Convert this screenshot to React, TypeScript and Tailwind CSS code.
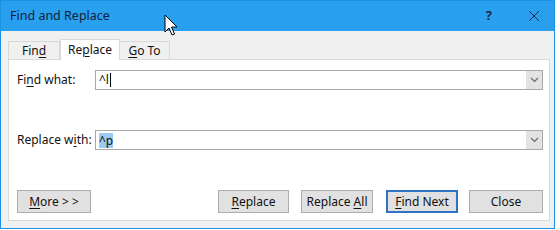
import React from "react";

const font = { fontFamily: '"Noto Sans", "Open Sans", sans-serif' };

function U({ children }: { children: React.ReactNode }) {
    return <span className="underline underline-offset-2 decoration-1">{children}</span>;
}

function Btn({ children, w, primary }: { children: React.ReactNode; w: string; primary?: boolean }) {
    return (
        <button
            className={
                "h-[23px] flex items-center justify-center text-[12px] text-[#111] bg-[#e1e1e1] " +
                w +
                (primary ? " border-2 border-[#2d74c4]" : " border border-[#adadad]")
            }
        >
            <span>{children}</span>
        </button>
    );
}

function Combo({ children }: { children: React.ReactNode }) {
    return (
        <div className="flex-1 h-[20px] border border-[#a8a8a8] bg-white flex items-center">
            <div className="flex-1 flex items-center pl-[3px] text-[12px] text-[#111]">{children}</div>
            <div className="w-[16px] h-full bg-[#e3e3e3] flex items-center justify-center">
                <svg width="9" height="6" viewBox="0 0 9 6">
                    <path d="M1 1 L4.5 4.5 L8 1" fill="none" stroke="#666" strokeWidth="1.1" />
                </svg>
            </div>
        </div>
    );
}

export default function App() {
    return (
        <div className="relative w-[560px] h-[230px] bg-white overflow-hidden" style={font}>
            <div className="w-[555px] h-[229px] border border-[#1c92e4] flex flex-col">
                <div className="h-[30px] bg-[#29a0ee] flex items-center pl-[9px] pr-[14px] shrink-0">
                    <span className="text-[12.5px] text-[#14223a] flex-1">Find and Replace</span>
                    <span className="text-[13px] font-bold text-[#1a2b4c] mr-[36px]">?</span>
                    <svg width="12" height="12" viewBox="0 0 12 12">
                        <path d="M1 1 L11 11 M11 1 L1 11" stroke="#1a2b4c" strokeWidth="1" />
                    </svg>
                </div>
                <div className="flex-1 bg-[#f0f0f0] pl-[7px] pr-[4px] pt-[7px]">
                    <div className="flex items-end h-[21px] text-[12px] text-[#111]">
                        <div className="w-[52px] h-[18px] border border-b-0 border-[#d9d9d9] bg-[#f0f0f0] flex items-center justify-center">
                            <span>Fin<U>d</U></span>
                        </div>
                        <div className="w-[60px] h-[21px] border border-b-0 border-[#d9d9d9] bg-white flex items-center justify-center -mb-px relative z-10">
                            <span>Re<U>p</U>lace</span>
                        </div>
                        <div className="w-[50px] h-[18px] border border-b-0 border-l-0 border-[#d9d9d9] bg-[#f0f0f0] flex items-center justify-center">
                            <span><U>G</U>o To</span>
                        </div>
                    </div>
                    <div className="h-[162px] bg-white border border-[#d9d9d9] flex flex-col pt-[10px] pl-[8px] pr-[6px]">
                        <div className="flex items-center h-[20px]">
                            <span className="w-[78px] text-[12px] text-[#111]">
                                Fi<U>n</U>d what:
                            </span>
                            <Combo>
                                ^l<span className="inline-block w-px h-[14px] bg-black ml-[1px]" />
                            </Combo>
                        </div>
                        <div className="flex items-center h-[20px] mt-[40px]">
                            <span className="w-[78px] text-[12px] text-[#111]">
                                Replace w<U>i</U>th:
                            </span>
                            <Combo>
                                <span className="bg-[#9ccaf0] leading-[15px]">^p</span>
                            </Combo>
                        </div>
                        <div className="flex items-center mt-[40px]">
                            <Btn w="w-[74px]">
                                <U>M</U>ore &gt; &gt;
                            </Btn>
                            <div className="flex-1" />
                            <Btn w="w-[71px]">
                                <U>R</U>eplace
                            </Btn>
                            <div className="w-[12px]" />
                            <Btn w="w-[72px]">
                                Replace <U>A</U>ll
                            </Btn>
                            <div className="w-[13px]" />
                            <Btn w="w-[72px]" primary>
                                <U>F</U>ind Next
                            </Btn>
                            <div className="w-[11px]" />
                            <Btn w="w-[74px]">Close</Btn>
                        </div>
                    </div>
                </div>
            </div>
            <svg className="absolute left-[164px] top-[14px]" width="16" height="24" viewBox="0 0 16 24">
                <path d="M1 1 L1 18 L5 14 L8 21 L10.5 20 L7.5 13 L13 13 Z" fill="#fff" stroke="#000" strokeWidth="1" />
            </svg>
        </div>
    );
}
